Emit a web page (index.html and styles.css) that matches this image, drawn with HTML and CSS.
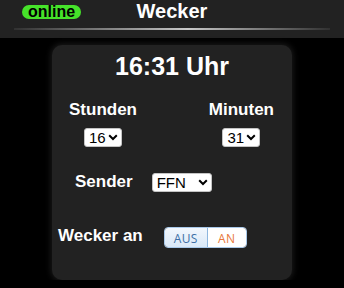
FILE: index.html
```html
<!DOCTYPE html>
<html lang="de">
<head>
<meta charset="utf-8">
<title>Wecker</title>
<link rel="stylesheet" href="styles.css">
</head>
<body>
<header class="topbar">
  <div class="topbar-row">
    <span class="badge">online</span>
    <h1 class="title">Wecker</h1>
    <span></span>
  </div>
  <div class="divider"></div>
</header>
<main class="card">
  <div class="time">16:31 Uhr</div>
  <div class="pickers">
    <div class="picker">
      <div class="label">Stunden</div>
      <span class="selwrap">
        <select class="sel sel-num"><option>16</option></select>
        <svg class="chev" width="10" height="7" viewBox="0 0 10 7"><path d="M1.2 1.3 L5 5 L8.8 1.3" fill="none" stroke="#000" stroke-width="2"/></svg>
      </span>
    </div>
    <div class="picker">
      <div class="label">Minuten</div>
      <span class="selwrap">
        <select class="sel sel-num"><option>31</option></select>
        <svg class="chev" width="10" height="7" viewBox="0 0 10 7"><path d="M1.2 1.3 L5 5 L8.8 1.3" fill="none" stroke="#000" stroke-width="2"/></svg>
      </span>
    </div>
  </div>
  <div class="row row-sender">
    <div class="label">Sender</div>
    <span class="selwrap selwrap-sender">
      <select class="sel sel-sender"><option>FFN</option><option>NDR 2</option></select>
      <svg class="chev" width="10" height="7" viewBox="0 0 10 7"><path d="M1.2 1.3 L5 5 L8.8 1.3" fill="none" stroke="#000" stroke-width="2"/></svg>
    </span>
  </div>
  <div class="row row-alarm">
    <div class="label">Wecker an</div>
    <div class="toggle">
      <span class="opt opt-off">AUS</span>
      <span class="opt opt-on">AN</span>
    </div>
  </div>
</main>
</body>
</html>
```
FILE: styles.css
```css
html, body {
  margin: 0;
  padding: 0;
  background: #000;
  font-family: "Liberation Sans", Arial, sans-serif;
  color: #fff;
}
.topbar {
  background: #222;
  height: 38px;
  box-sizing: border-box;
}
.topbar-row {
  display: grid;
  grid-template-columns: 1fr auto 1fr;
  align-items: start;
}
.badge {
  justify-self: start;
  margin: 5px 0 0 22px;
  height: 14px;
  line-height: 14px;
  padding: 0 6px;
  border-radius: 7px;
  background: #46e22a;
  color: #000;
  font-weight: bold;
  font-size: 16px;
}
.title {
  margin: 0;
  font-size: 20px;
  line-height: 23px;
  font-weight: bold;
}
.divider {
  margin: 5px 14px 0;
  height: 2px;
  background: linear-gradient(to right, rgba(180,180,180,0.1), #c8c8c8 55%, rgba(180,180,180,0.1));
}
.card {
  display: block;
  width: 240px;
  height: 235px;
  box-sizing: border-box;
  margin: 7px auto 0;
  padding-top: 7px;
  background: #222;
  border-radius: 10px;
  box-shadow: 0 0 6px 1px #1c1c1c;
}
.time {
  text-align: center;
  font-size: 25px;
  line-height: 29px;
  font-weight: bold;
}
.label {
  font-size: 17px;
  line-height: 20px;
  font-weight: bold;
  white-space: nowrap;
}
.pickers {
  display: flex;
  justify-content: space-between;
  padding: 0 18px 0 17px;
  margin-top: 19px;
}
.picker {
  display: flex;
  flex-direction: column;
  align-items: center;
  gap: 8px;
}
.selwrap {
  position: relative;
  display: block;
  height: 19px;
}
.sel {
  display: block;
  -webkit-appearance: none;
  appearance: none;
  height: 19px;
  font-family: "Liberation Sans", Arial, sans-serif;
  font-size: 15px;
  line-height: 17px;
  padding: 0 0 0 4px;
  margin: 0;
  background: #fff;
  color: #000;
  border: 1px solid #c4c4c4;
  border-radius: 3px;
  box-sizing: border-box;
  outline: none;
}
.sel-num { width: 38px; }
.sel-sender { width: 60px; }
.chev {
  position: absolute;
  right: 4px;
  top: 6px;
  pointer-events: none;
}
.row {
  display: flex;
  align-items: flex-start;
  gap: 21px;
}
.row-sender {
  margin-top: 25px;
  padding-left: 23px;
  gap: 19px;
}
.selwrap-sender { margin-top: 1px; }
.row-alarm {
  margin-top: 34px;
  padding-left: 6px;
}
.toggle {
  display: flex;
  margin-top: 1px;
  height: 21px;
  width: 83px;
  box-sizing: border-box;
  border: 1px solid #a9c9ea;
  border-radius: 4px;
  overflow: hidden;
  font-family: "Open Sans", "Liberation Sans", sans-serif;
  font-size: 12px;
  letter-spacing: 0.3px;
}
.opt {
  display: flex;
  align-items: center;
  justify-content: center;
  padding-top: 1px;
}
.opt-off {
  width: 42px;
  background: linear-gradient(#f2f7fd, #dae9f8);
  color: #3d6fa6;
  border-right: 1px solid #8db6de;
}
.opt-on {
  flex: 1;
  background: #fff;
  color: #e8773a;
}
```
